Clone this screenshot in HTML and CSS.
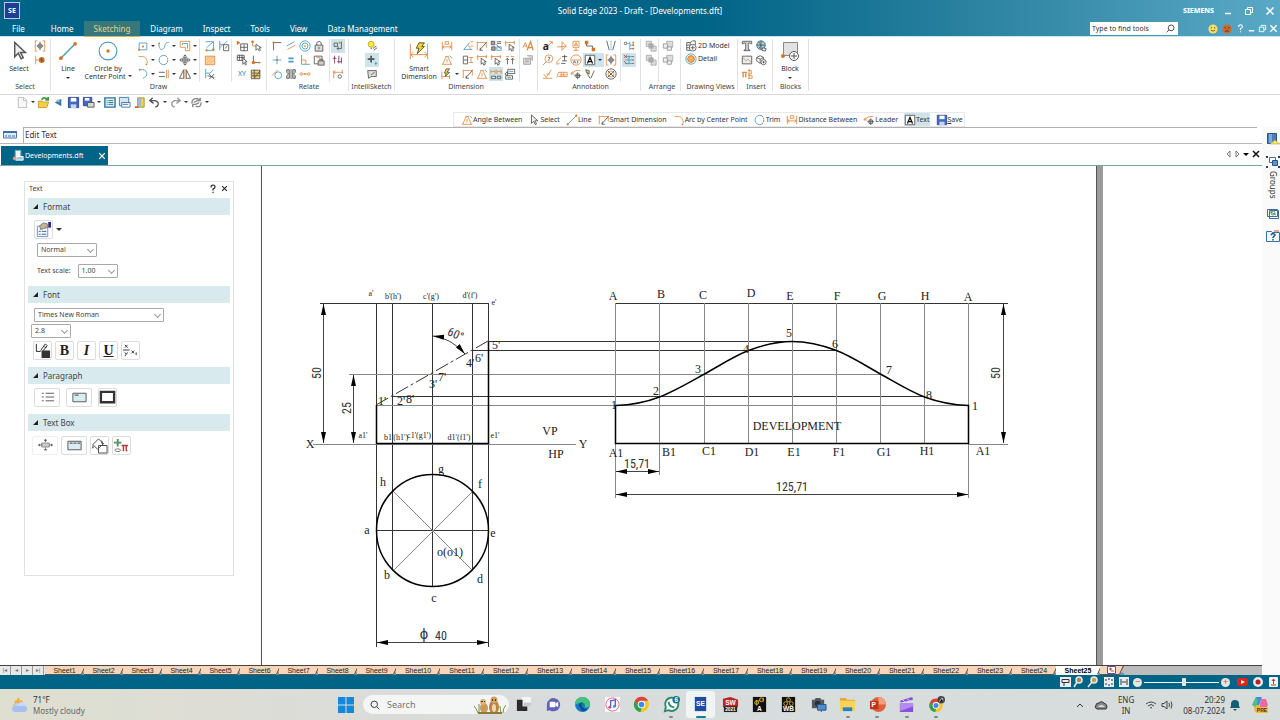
FILE: index.html
```html
<!DOCTYPE html>
<html lang="en">
<head>
    <meta charset="UTF-8">
    <meta name="viewport" content="width=device-width, initial-scale=1.0">
    <title>Solid Edge 2023 - Draft - [Developments.dft]</title>
    <link rel="stylesheet" href="styles.css">
</head>
<body>
    <!-- icons -->
    <svg class="sprite">
        <symbol id="pointer" viewBox="0 0 14 14"><path class="k" fill="#eee" d="M4 1v10l2.500-2.500 2 4 1.500-.8-2-3.700h3.500z"/></symbol>
        <symbol id="frame" viewBox="0 0 14 14"><path class="o" d="M4 1H1.500v12H4M10 1h2.500v12H10"/><circle class="k" cx="7" cy="7" r="2.500"/><path class="k" d="M7 2v10M3 7h8"/></symbol>
        <symbol id="snap" viewBox="0 0 14 14"><path class="o" d="M2 2v10M2 7h4"/><circle class="fo" cx="9" cy="7" r="3.500"/><path class="k" d="M7 6l4 2M9 4v6"/></symbol>
        <symbol id="line" viewBox="0 0 14 14"><path class="b" d="M2 12L12 2"/><circle class="fo" cx="2" cy="12" r="1.300"/><circle class="fo" cx="12" cy="2" r="1.300"/></symbol>
        <symbol id="circle" viewBox="0 0 18 18"><circle class="b" cx="9" cy="9" r="8"/><circle class="fo" cx="9" cy="9" r="1.500"/></symbol>
        <symbol id="rect" viewBox="0 0 14 14"><path class="b" d="M2.500 3.500h9v8h-9z"/><circle class="fo" cx="7" cy="7.500" r="1.200"/><circle class="fo" cx="2.500" cy="11.500" r="1.200"/></symbol>
        <symbol id="curve" viewBox="0 0 14 14"><path class="b" d="M1 4c0 10 6 8 7 3s3-4 5-4"/><circle class="fo" cx="1.500" cy="4" r="1"/></symbol>
        <symbol id="offset" viewBox="0 0 14 14"><path class="o" d="M1.500 1.500h11v11h-5v-4h-6z"/><path class="b" d="M4 6V4h6v6"/></symbol>
        <symbol id="arc" viewBox="0 0 14 14"><path class="o" d="M2 3h4c4 0 6 3 6 8"/><circle class="fo" cx="11" cy="12" r="1"/></symbol>
        <symbol id="trim" viewBox="0 0 14 14"><path class="b" d="M9 2a5.500 5.500 0 1 0 0 10"/><path class="k dash" d="M9 2q5 5 0 10"/></symbol>
        <symbol id="move" viewBox="0 0 14 14"><path class="k" d="M7 1v12M1 7h12M5 3l2-2 2 2M5 11l2 2 2-2M3 5L1 7l2 2M11 5l2 2-2 2M4.500 4.500h5v5h-5z"/></symbol>
        <symbol id="fillet" viewBox="0 0 14 14"><path class="b" d="M3 2h4c6 1 6 8 0 10"/><circle class="fo" cx="3" cy="2" r="1"/></symbol>
        <symbol id="extend" viewBox="0 0 14 14"><path class="k" d="M1 5h7M1 10h7"/><path class="o" d="M10 2v10M12 2v10"/></symbol>
        <symbol id="mirror" viewBox="0 0 14 14"><path class="k" d="M5.500 2v10h-5zM8.500 2v10h5z"/><path class="o" d="M7 1v12"/></symbol>
        <symbol id="goal" viewBox="0 0 14 14"><path class="b" d="M2 2h9M3 9l8-7v10M2 12h10"/><circle class="fo" cx="3" cy="12" r="1.300"/><circle class="fo" cx="11" cy="11" r="1.300"/></symbol>
        <symbol id="copy" viewBox="0 0 14 14"><path class="b" d="M2 1v11M2 5h5l4-4M2 9l4-4"/><path class="k" fill="#fff" d="M6.500 5.500h6v7h-6z"/><path class="k" d="M8 10l3-3"/></symbol>
        <symbol id="hatch" viewBox="0 0 14 14"><path fill="#ffd09a" stroke="#d58a48" d="M1.500 2.500h11v10h-11z"/><path class="o thin-line" d="M3 7l4-4M3 11l8-8M7 11l4-4"/></symbol>
        <symbol id="clean" viewBox="0 0 14 14"><path class="b" d="M2 1v11M2 6h5l4-4"/><path class="k" d="M6 7l6 6M12 7l-6 6M4 9l8 2"/></symbol>
        <symbol id="table" viewBox="0 0 14 14"><path class="k" d="M5.500 4.500h8v8h-8zM9.500 5v8M5 8.500h8"/><path class="fo" d="M1 1l4 2-4 3z"/></symbol>
        <symbol id="node" viewBox="0 0 14 14"><path class="o" d="M3 2v5h6"/><circle class="fo" cx="3" cy="2" r="1.500"/><path class="k" fill="#fff" d="M7 5v7l2-2 2 3 1-1-1-3h2z"/></symbol>
        <symbol id="gridsel" viewBox="0 0 14 14"><path class="k" d="M1.500 1.500h8v6h-8zM4 1v7M7 1v7M1 4h9"/><path class="k" fill="#fff" d="M8 5v7l2-2 1 3 1-1-1-3h2z"/></symbol>
        <symbol id="origin" viewBox="0 0 14 14"><path class="k" d="M4 2v8h8"/><circle class="fo" cx="4" cy="10" r="2"/><circle class="fo" cx="11" cy="10" r="1"/></symbol>
        <symbol id="notes" viewBox="0 0 14 14"><path class="k" fill="#f0d26b" d="M1.500 2.500h10v10h-10z"/><path class="k" d="M2 6h10M2 9h10M5 12l7-9M5 2v10"/></symbol>
        <symbol id="corner" viewBox="0 0 14 14"><path class="k" d="M3 12V3h9"/><circle class="fo" cx="3" cy="3" r="1.300"/></symbol>
        <symbol id="parallel" viewBox="0 0 14 14"><path class="b" d="M2 7l9-5"/><path class="o" d="M3 11l9-5"/></symbol>
        <symbol id="target" viewBox="0 0 14 14"><circle class="b" cx="7" cy="7" r="6"/><circle class="b" cx="7" cy="7" r="3.500"/><circle class="fo" cx="7" cy="7" r="1"/></symbol>
        <symbol id="lock" viewBox="0 0 14 14"><path class="k" fill="#ddd" d="M2.500 6h9v7h-9z"/><path class="k" d="M4.500 6V3q2.500-3 5 0v3M7 8v3"/></symbol>
        <symbol id="plus" viewBox="0 0 14 14"><path class="b" d="M7 2v10M2 7h10"/><circle class="fo" cx="7" cy="7" r="1"/></symbol>
        <symbol id="equal" viewBox="0 0 14 14"><path class="b thick" d="M4 5h6M4 9h6"/></symbol>
        <symbol id="perp" viewBox="0 0 14 14"><path class="b" d="M3 1v11h10"/><path class="o" d="M3 7h5v5"/></symbol>
        <symbol id="rigid" viewBox="0 0 14 14"><path class="k" d="M1.500 2.500h9v9h-9z"/><path class="k" fill="#ccc" d="M6 8h7v5H6zM8 8V6h3v2"/><path class="o" d="M4 4h4v3"/></symbol>
        <symbol id="tangent" viewBox="0 0 14 14"><circle class="b" cx="8.500" cy="8.500" r="4"/><path class="o" d="M1 9l7-7"/></symbol>
        <symbol id="symm" viewBox="0 0 14 14"><path class="k" fill="#ccc" d="M2 2h3v10H2V9l2-2-2-2zM12 2H9v10h3V9l-2-2 2-2z"/><path class="k" d="M7 1v12"/></symbol>
        <symbol id="chain" viewBox="0 0 14 14"><circle class="o" cx="2.500" cy="7" r="1.500"/><path class="o" d="M4 7h6"/><circle class="fo" cx="7" cy="7" r="1"/><circle class="o" cx="11.500" cy="7" r="1.500"/></symbol>
        <symbol id="keep" viewBox="0 0 14 14"><path class="k" d="M2.500 3.500h4v4h-4zM11 2v8H6l2-2M6 10l2 2"/><path class="fo" d="M8 2h2v2H8z"/></symbol>
        <symbol id="purple" viewBox="0 0 14 14"><path stroke="#7a356f" fill="none" d="M3 2v9M8 2v9M1 5h4M6 9h5M11 4v7"/></symbol>
        <symbol id="dimset" viewBox="0 0 14 14"><path class="o" d="M2 3v9M12 2v5M2 5h10M4 3L2 5l2 2"/><circle class="k" cx="9" cy="10" r="2"/></symbol>
        <symbol id="bulb" viewBox="0 0 14 14"><circle fill="#f4ec3c" stroke="#b5aa2e" cx="6" cy="5" r="3.500"/><path class="k" d="M6 9v2M8 10l4-3M9 12l4-3"/></symbol>
        <symbol id="cross" viewBox="0 0 14 14"><path class="k thick" d="M6 2v8M2 6h8"/><path class="b" d="M10 11h3M11.500 9v4"/></symbol>
        <symbol id="note" viewBox="0 0 14 14"><path fill="#ddd" class="k" d="M2 3h10v7H6l-3 2z"/><path class="k" d="M6 8l4-3"/></symbol>
        <symbol id="smart" viewBox="0 0 22 20"><path class="o" d="M1.500 2v17M20.500 2v17M2 14h18M5 11l-3 3 3 3M17 11l3 3-3 3"/><path fill="#f8d23e" stroke="#58501f" d="M11 1h6l-3 4h3l-8 8 2-6H8z"/></symbol>
        <symbol id="dist" viewBox="0 0 14 14"><path class="o" d="M1.500 2v10M12.500 2v10M2 8h10M4 6L2 8l2 2M10 6l2 2-2 2M5 2h4v3H5z"/></symbol>
        <symbol id="angle" viewBox="0 0 14 14"><path class="o" d="M1 12h12M2 12L6 3M8 3l4 9M5 3h4M7 6v4"/><path class="b" d="M10 2l3 3"/></symbol>
        <symbol id="angle2" viewBox="0 0 14 14"><path class="b" d="M2 11l7-8M2 11h10"/><path class="o" d="M6 6q4 1 4 5M10 2h3M10 7h3"/></symbol>
        <symbol id="flashdim" viewBox="0 0 14 14"><path class="o" d="M1 13V4M1 10h9M10 8v5"/><path fill="#f8d23e" stroke="#555" d="M6 1h4L7 5h3l-5 5 1-4H4z"/></symbol>
        <symbol id="coord" viewBox="0 0 14 14"><path class="o" d="M1.500 2v10M12 2v7M1 3h11"/><path class="k" d="M4 12l8-9M5 9v3h3"/></symbol>
        <symbol id="dimcopy" viewBox="0 0 14 14"><path class="k" d="M1.500 2.500h5v9h-5zM2 7h4"/><path class="o" d="M8 4h5M8 10h5M10.500 4v6"/></symbol>
        <symbol id="bracketdim" viewBox="0 0 14 14"><path class="o" d="M1 3h12M2 1v6M12 1v4"/><path class="k" fill="#fff" d="M6 5v7l2-2 1 3 2-1-1-3h2z"/></symbol>
        <symbol id="feature" viewBox="0 0 14 14"><path class="k" fill="#aaa" d="M1.500 1.500h4v4h-4zM2 8h4v4H2z"/><path class="k" d="M8 2h5M8 4h5"/><path class="b" d="M8 8h5v4H8z"/><path class="k" d="M7 5l5 5"/></symbol>
        <symbol id="arrowsup" viewBox="0 0 14 14"><path class="k" d="M4 12V5M10 12V5M2 7l2-2 2 2M8 7l2-2 2 2"/><path class="o" d="M2 3h4M8 3h4"/></symbol>
        <symbol id="align" viewBox="0 0 14 14"><path class="o" d="M1 2v5M6 2v5M1 4h5M8 2v5M13 2v5M8 4h5"/><path class="k" d="M1.500 9.500h5v3h-5zM8.500 9.500h4v3h-4z"/></symbol>
        <symbol id="stack" viewBox="0 0 14 14"><path class="k" d="M4.500 1.500h8v5h-8zM2 9h8v4H2zM1 7l3-3v5z"/><path class="b" d="M6 4h5M4 11h4"/></symbol>
        <symbol id="aa" viewBox="0 0 14 14"><path class="o" d="M1 9l3-6 2 6M2 7h3"/><path class="o wide-line" d="M6 12l4-10 3 10M7 9h5"/></symbol>
        <symbol id="style" viewBox="0 0 14 14"><path fill="#ddd" stroke="#999" d="M2 5h8v7H2zM6 2h6v6"/><path stroke="#999" d="M4 7h4M4 9h4"/></symbol>
        <symbol id="callout" viewBox="0 0 14 14"><text class="ico" x="1" y="12">a</text><path class="o" d="M7 7l5-5M9 2h3v3"/></symbol>
        <symbol id="balloon" viewBox="0 0 14 14"><path class="o" d="M1 8h5l6-1-5-5v10l5-5"/></symbol>
        <symbol id="datum" viewBox="0 0 14 14"><path class="o" d="M3.500 1.500h7v7h-7zM7 9v3M4 12h6M5 7l2-4 2 4M6 6h2"/></symbol>
        <symbol id="connector" viewBox="0 0 14 14"><path class="k" d="M3 3v4h7v4"/><path class="fo" d="M1 1h4v4H1zM9 9h4v4H9z"/></symbol>
        <symbol id="vee" viewBox="0 0 14 14"><path class="k" d="M2 1l3 11M12 1L9 12"/><path class="b dash" d="M7 1v11"/></symbol>
        <symbol id="find" viewBox="0 0 14 14"><circle class="o" cx="8" cy="5.500" r="4.500"/><path class="o" d="M5 9l-4 4"/><path class="k" d="M7 4q3-1 2 1l-1 1v2"/></symbol>
        <symbol id="level" viewBox="0 0 14 14"><path class="o" d="M1 12V9l5-5M1 12l3-1"/><path class="k" d="M7 3h6M10 1v7M7 8h6M6 11h5"/></symbol>
        <symbol id="datumt" viewBox="0 0 14 14"><circle class="o" cx="7" cy="7" r="6"/><path class="o" d="M2 7h10"/><path class="k" d="M4 11l1-3 2 3M9 8v3"/></symbol>
        <symbol id="textbox" viewBox="0 0 14 14"><path class="k" fill="#fff" d="M1.500 1.500h11v11h-11z"/><path stroke="#111" stroke-width="1.500" fill="none" d="M4 11l3-7 3 7M5 9h4"/></symbol>
        <symbol id="surface" viewBox="0 0 14 14"><path class="o" d="M2 7l3 4 6-9M1 12h11M5 7h4"/></symbol>
        <symbol id="fcf" viewBox="0 0 14 14"><path class="o" d="M1 11l2-6h10v5H3M6 5v5M9 5v5M5 8h7"/></symbol>
        <symbol id="leader" viewBox="0 0 14 14"><path class="o" d="M1 7l6-4h5M1 7l2-3M1 7h4"/><path class="k" fill="#fff" d="M7 7h4v4H7z"/><path class="k" d="M9 5v8M5 9h8"/></symbol>
        <symbol id="weld" viewBox="0 0 14 14"><path fill="#e5dc4c" class="k" d="M2 2l4 1v4L3 5z"/><path class="k" d="M3 5l4 7M8 12l4-9"/></symbol>
        <symbol id="bolt" viewBox="0 0 14 14"><circle class="k" cx="7" cy="7" r="6"/><circle class="o" cx="7" cy="7" r="3.500"/><path class="k" d="M3 3l8 8M11 3l-8 8"/></symbol>
        <symbol id="listset" viewBox="0 0 14 14"><circle class="k" cx="3" cy="4" r="1.500"/><path class="b" d="M5 4h3M8 2v10M8 6h4M8 10h4"/><path class="fo" d="M11 2h2v2h-2zM11 5h2v2h-2zM11 9h2v2h-2z"/></symbol>
        <symbol id="listoff" viewBox="0 0 14 14"><path class="b" d="M7 2v10M2 3h10M2 7h10M2 11h10"/><path stroke="#c54e3a" d="M1 1l4 4M5 1L1 5M1 8l4 4M11 3h2M11 7h2M11 11h2"/></symbol>
        <symbol id="front" viewBox="0 0 14 14"><path fill="#ddd" stroke="#aaa" d="M1.500 1.500h6v6h-6zM7 7h6v6H7z"/><path fill="#aaa" d="M4 4h6v6H4z"/></symbol>
        <symbol id="group" viewBox="0 0 14 14"><path fill="#ddd" stroke="#aaa" d="M5.500 1.500h7v7h-7z"/><path fill="#eee" stroke="#999" d="M1.500 4.500h5v5h-5zM6 8h5v4H6z"/></symbol>
        <symbol id="model" viewBox="0 0 14 14"><path class="k" d="M2 12V3h4v9zM6 3l3-2h3v5M2 6h4M2 9h4"/><circle class="k" fill="#fff" cx="9" cy="9" r="4"/><path class="k" d="M9 6.500v5M6.500 9h5"/></symbol>
        <symbol id="detail" viewBox="0 0 14 14"><circle cx="7" cy="7" r="6" fill="#fff" stroke="#4a9cba"/><circle cx="7" cy="7" r="4" fill="#f1ab62" stroke="#d77d2d"/></symbol>
        <symbol id="bigt" viewBox="0 0 14 14"><path class="k" fill="#ddd" d="M1.500 1.500h11v3h-1l-1-1H8.500v8h2v1h-7v-1h2v-8H3.500l-1 1h-1z"/></symbol>
        <symbol id="globe" viewBox="0 0 14 14"><circle cx="7" cy="6" r="5" fill="#a9cddb" stroke="#28708a"/><path class="k" d="M7 1v10M2 6h10M4 2q5 5 0 8"/><path fill="#eee" class="k" d="M9 9l4 1-1 3-4-1z"/></symbol>
        <symbol id="image" viewBox="0 0 14 14"><path class="k" fill="#e6eef0" d="M1.500 2.500h11v9h-11z"/><path class="o" d="M2 4l4 4 2-2 4 4"/></symbol>
        <symbol id="blockadd" viewBox="0 0 14 14"><path class="k" d="M2 4l4-2 4 2v4l-4 3-4-3zM2 4l4 2 4-2M6 6v4"/><circle class="k" fill="#fff" cx="10" cy="9.500" r="3"/><path class="k" d="M10 8v3M8.500 9.500h3"/></symbol>
        <symbol id="pi" viewBox="0 0 14 14"><path class="o wide-line" d="M1 5h6M2.500 5v6M5.500 5v6"/><path class="o" d="M9.500 1v12M8 3h4v4H8M8 9h5v3H8"/></symbol>
        <symbol id="block" viewBox="0 0 20 20"><path fill="#e2e2e2" stroke="#888" d="M3.500 1.500h14v13h-14z"/><circle class="k" fill="#fff" cx="14" cy="15" r="4.500"/><path class="k" d="M14 12v6M11 15h6"/><circle class="fo" cx="3" cy="15" r="2"/></symbol>
        <symbol id="new" viewBox="0 0 14 14"><path fill="#f7f7f7" stroke="#bbb" d="M2.500 1.500h6l3 3v8h-9zM8 2v3h3"/></symbol>
        <symbol id="open" viewBox="0 0 14 14"><path fill="#f7cf44" stroke="#c89a2a" d="M1.500 5.500h4l1 1h6l-2 6h-9z"/><path stroke="#3a9c44" fill="none" stroke-width="2" d="M5 4q3-4 6 0M9 4h3V1"/></symbol>
        <symbol id="share" viewBox="0 0 14 14"><path fill="#3c78a8" d="M3 7l7-4v8z"/><path fill="#9bc6df" d="M4 5l4-2v4z"/></symbol>
        <symbol id="save" viewBox="0 0 14 14"><path fill="#4468c4" stroke="#2a4590" d="M1.500 1.500h11v11h-11z"/><path fill="#fff" d="M4 2h6v4H4z"/><path fill="#c9d4ee" d="M4 9h6v4H4z"/></symbol>
        <symbol id="saveas" viewBox="0 0 14 14"><path fill="#4468c4" stroke="#2a4590" d="M1.500 1.500h9v9h-9z"/><path fill="#fff" d="M3 2h5v3H3z"/><path fill="#cfe0cf" class="k" d="M6 7h7v5H6z"/></symbol>
        <symbol id="props" viewBox="0 0 14 14"><path fill="#e3f0f5" stroke="#2f7691" stroke-width="1.500" d="M2 2h11v10H2z"/><path stroke="#2f7691" d="M4 5h1M6 5h5M4 7h1M6 7h5M4 9h1M6 9h5"/></symbol>
        <symbol id="print" viewBox="0 0 14 14"><path fill="#d4e8f2" stroke="#3c78a8" d="M1.500 1.500h10v9h-10z"/><path fill="#fff" stroke="#3c78a8" d="M4 7h9v5H4z"/><path stroke="#3c78a8" d="M5 9h6"/></symbol>
        <symbol id="color" viewBox="0 0 14 14"><path fill="#f7d449" stroke="#a98c2a" d="M5 2h7v10H5z"/><path fill="#9dbbd4" d="M5 3l4-1v9l-4 2z"/><path fill="#d36c30" d="M2 11h4v2H2z"/></symbol>
        <symbol id="undo" viewBox="0 0 14 14"><path class="k wide-line" d="M5 2L2 5l4 3M2 5h6q5 2 2 6l-2 1"/></symbol>
        <symbol id="redo" viewBox="0 0 14 14"><path stroke="#999" stroke-width="1.500" fill="none" d="M9 2l3 3-4 3M12 5H6q-5 2-2 6l2 1"/></symbol>
        <symbol id="repeat" viewBox="0 0 14 14"><path stroke="#888" stroke-width="1.500" fill="none" d="M2 8q0-6 6-5l3 2M11 2v3H8M12 7q0 6-6 4M3 12V9h3M4 7l4-2M6 9l4-2"/></symbol>
        <symbol id="prompt" viewBox="0 0 14 8"><path fill="#dcebf7" stroke="#4b7cb0" d="M.5 1h13v6H.5z"/><path fill="#3d6fa8" d="M0 0h14v2H0z"/><path fill="#8fb2d4" d="M2 4h2v2H2zM5 4h3v2H5zM9 4h3v2H9z"/></symbol>
        <symbol id="doc" viewBox="0 0 14 14"><path fill="#e9f2f7" stroke="#78a6be" d="M3.500 1.500h6v9h-6z"/><path fill="#a4c5d8" stroke="#fff" d="M6 8h6v4H4z"/><circle fill="#d9a08a" cx="3" cy="10" r="2"/></symbol>
        <symbol id="help" viewBox="0 0 10 12"><path fill="none" stroke="currentColor" stroke-width="1.500" d="M2.500 4q0-3 2.500-3t2.500 2.500Q7.500 5 5 6v2M5 9.500V11"/></symbol>
        <symbol id="close" viewBox="0 0 10 10"><path fill="none" stroke="currentColor" stroke-width="1.500" d="M1.500 1.500l7 7M8.500 1.500l-7 7"/></symbol>
        <symbol id="min" viewBox="0 0 10 10"><path stroke="currentColor" stroke-width="1.500" d="M2 7.500h6"/></symbol>
        <symbol id="restore" viewBox="0 0 10 10"><path fill="none" stroke="currentColor" d="M3.500 3V1.500h5v5H7M1.500 3.500h5v5h-5z"/></symbol>
        <symbol id="search" viewBox="0 0 14 14"><circle cx="6" cy="6" r="4.500" fill="none" stroke="currentColor" stroke-width="1.300"/><path stroke="currentColor" stroke-width="1.300" d="M9.500 9.500L13 13"/></symbol>
        <symbol id="search-left" viewBox="0 0 14 14"><circle cx="8" cy="6" r="4.500" fill="none" stroke="currentColor" stroke-width="1.300"/><path stroke="currentColor" stroke-width="1.300" d="M4.500 9.500L1 13"/></symbol>
        <symbol id="smile" viewBox="0 0 12 12"><circle cx="6" cy="6" r="5.500" fill="#f4df6a"/><path fill="none" stroke="#6b5a18" d="M4 3.500v2M8 3.500v2M3.500 7.500q2.500 2 5 0"/></symbol>
        <symbol id="frown" viewBox="0 0 12 12"><circle cx="6" cy="6" r="5.500" fill="#cf6a2f"/><path fill="none" stroke="#55240c" d="M3 4l2 1M9 4L7 5M3.500 9q2.500-2 5 0"/></symbol>
        <symbol id="chrome" viewBox="0 0 18 18"><circle cx="9" cy="9" r="8" fill="#f6c42d"/><path fill="#dd4438" d="M2 5a8 8 0 0 1 14 0H9L6 11z"/><path fill="#2ba24c" d="M2 5l4 6 3 2-1 4A8 8 0 0 1 2 5z"/><circle cx="9" cy="9" r="4" fill="#fff"/><circle cx="9" cy="9" r="3" fill="#4285f4"/></symbol>
    </svg>

    <header class="titlebar">
        <div class="title-row">
            <div class="logo">SE</div>
            <h1>Solid Edge 2023 - Draft - [Developments.dft]</h1>
            <div class="window-controls">
                <b>SIEMENS</b>
                <button aria-label="Minimize"><svg><use href="#min"/></svg></button>
                <button aria-label="Restore"><svg><use href="#restore"/></svg></button>
                <button aria-label="Close"><svg><use href="#close"/></svg></button>
            </div>
        </div>
        <div class="menu-row">
            <nav class="menu">
                <a class="file" href="#">File</a>
                <a href="#">Home</a>
                <a class="active" href="#">Sketching</a>
                <a href="#">Diagram</a>
                <a href="#">Inspect</a>
                <a href="#">Tools</a>
                <a href="#">View</a>
                <a href="#">Data Management</a>
            </nav>
            <div class="find">
                <input type="text" aria-label="Find tools" placeholder="Type to find tools">
                <svg><use href="#search-left"/></svg>
            </div>
            <div class="doc-controls">
                <button class="face" aria-label="Like"><svg><use href="#smile"/></svg></button>
                <button class="face" aria-label="Dislike"><svg><use href="#frown"/></svg></button>
                <button aria-label="Help"><svg><use href="#help"/></svg></button>
                <button aria-label="Minimize document"><svg><use href="#min"/></svg></button>
                <button aria-label="Restore document"><svg><use href="#restore"/></svg></button>
                <button aria-label="Close document"><svg><use href="#close"/></svg></button>
            </div>
        </div>
    </header>

    <section class="ribbon">
        <div class="group g-select">
            <div class="tools">
                <button class="big"><svg class="big-icon"><use href="#pointer"/></svg>Select</button>
                <div class="col">
                    <button class="tool"><svg><use href="#frame"/></svg></button>
                    <button class="tool"><svg><use href="#snap"/></svg></button>
                </div>
            </div>
            <div class="group-name">Select</div>
        </div>
        <div class="group g-draw">
            <div class="tools">
                <button class="big narrow drop"><svg class="big-icon"><use href="#line"/></svg>Line</button>
                <button class="big wide"><svg class="big-icon"><use href="#circle"/></svg><span>Circle by</span><span class="inline-drop">Center Point</span></button>
                <div class="col">
                    <button class="tool more"><svg><use href="#rect"/></svg></button>
                    <button class="tool more"><svg><use href="#arc"/></svg></button>
                    <button class="tool more"><svg><use href="#fillet"/></svg></button>
                </div>
                <div class="col">
                    <button class="tool more"><svg><use href="#curve"/></svg></button>
                    <button class="tool more"><svg><use href="#trim"/></svg></button>
                    <button class="tool more"><svg><use href="#extend"/></svg></button>
                </div>
                <div class="col">
                    <button class="tool more"><svg><use href="#offset"/></svg></button>
                    <button class="tool more"><svg><use href="#move"/></svg></button>
                    <button class="tool more"><svg><use href="#mirror"/></svg></button>
                </div>
                <div class="col split">
                    <button class="tool"><svg><use href="#goal"/></svg></button>
                    <button class="tool"><svg><use href="#hatch"/></svg></button>
                    <button class="tool"><svg><use href="#clean"/></svg></button>
                </div>
                <div class="col">
                    <button class="tool"><svg><use href="#copy"/></svg></button>
                </div>
                <div class="col split">
                    <button class="tool"><svg><use href="#table"/></svg></button>
                    <button class="tool"><svg><use href="#gridsel"/></svg></button>
                    <button class="tool xy">XY</button>
                </div>
                <div class="col">
                    <button class="tool"><svg><use href="#node"/></svg></button>
                    <button class="tool"><svg><use href="#origin"/></svg></button>
                    <button class="tool"><svg><use href="#notes"/></svg></button>
                </div>
            </div>
            <div class="group-name">Draw</div>
        </div>
        <div class="group g-relate">
            <div class="tools">
                <div class="col">
                    <button class="tool"><svg><use href="#corner"/></svg></button>
                    <button class="tool"><svg><use href="#plus"/></svg></button>
                    <button class="tool"><svg><use href="#tangent"/></svg></button>
                </div>
                <div class="col">
                    <button class="tool"><svg><use href="#parallel"/></svg></button>
                    <button class="tool"><svg><use href="#equal"/></svg></button>
                    <button class="tool"><svg><use href="#symm"/></svg></button>
                </div>
                <div class="col">
                    <button class="tool"><svg><use href="#target"/></svg></button>
                    <button class="tool"><svg><use href="#perp"/></svg></button>
                    <button class="tool"><svg><use href="#chain"/></svg></button>
                </div>
                <div class="col">
                    <button class="tool"><svg><use href="#lock"/></svg></button>
                    <button class="tool"><svg><use href="#rigid"/></svg></button>
                </div>
                <div class="col split">
                    <button class="tool on"><svg><use href="#keep"/></svg></button>
                    <button class="tool"><svg><use href="#purple"/></svg></button>
                    <button class="tool"><svg><use href="#dimset"/></svg></button>
                </div>
            </div>
            <div class="group-name">Relate</div>
        </div>
        <div class="group g-intelli">
            <div class="tools">
                <div class="col">
                    <button class="tool"><svg><use href="#bulb"/></svg></button>
                    <button class="tool on"><svg><use href="#cross"/></svg></button>
                    <button class="tool"><svg><use href="#note"/></svg></button>
                </div>
            </div>
            <div class="group-name">IntelliSketch</div>
        </div>
        <div class="group g-dimension">
            <div class="tools">
                <button class="big wide"><svg class="big-icon"><use href="#smart"/></svg><span>Smart</span><span>Dimension</span></button>
                <div class="col">
                    <button class="tool"><svg><use href="#dist"/></svg></button>
                    <button class="tool"><svg><use href="#angle"/></svg></button>
                    <button class="tool more"><svg><use href="#flashdim"/></svg></button>
                </div>
                <div class="col">
                    <button class="tool"><svg><use href="#angle2"/></svg></button>
                    <button class="tool"><svg><use href="#dimcopy"/></svg></button>
                    <button class="tool"><svg><use href="#coord"/></svg></button>
                </div>
                <div class="col">
                    <button class="tool"><svg><use href="#coord"/></svg></button>
                    <button class="tool"><svg><use href="#bracketdim"/></svg></button>
                    <button class="tool"><svg><use href="#angle"/></svg></button>
                </div>
                <div class="col">
                    <button class="tool"><svg><use href="#feature"/></svg></button>
                    <button class="tool"><svg><use href="#bracketdim"/></svg></button>
                    <button class="tool on"><svg><use href="#align"/></svg></button>
                </div>
                <div class="col">
                    <button class="tool"><svg><use href="#bracketdim"/></svg></button>
                    <button class="tool"><svg><use href="#arrowsup"/></svg></button>
                    <button class="tool"><svg><use href="#stack"/></svg></button>
                </div>
                <div class="col split">
                    <button class="tool"><svg><use href="#aa"/></svg></button>
                    <button class="tool"><svg><use href="#style"/></svg></button>
                </div>
            </div>
            <div class="group-name">Dimension</div>
        </div>
        <div class="group g-annotation">
            <div class="tools">
                <div class="col">
                    <button class="tool"><svg><use href="#callout"/></svg></button>
                    <button class="tool"><svg><use href="#find"/></svg></button>
                    <button class="tool"><svg><use href="#surface"/></svg></button>
                </div>
                <div class="col">
                    <button class="tool"><svg><use href="#balloon"/></svg></button>
                    <button class="tool"><svg><use href="#level"/></svg></button>
                    <button class="tool"><svg><use href="#fcf"/></svg></button>
                </div>
                <div class="col">
                    <button class="tool"><svg><use href="#datum"/></svg></button>
                    <button class="tool"><svg><use href="#datumt"/></svg></button>
                    <button class="tool"><svg><use href="#leader"/></svg></button>
                </div>
                <div class="col">
                    <button class="tool"><svg><use href="#connector"/></svg></button>
                    <button class="tool more on"><svg><use href="#textbox"/></svg></button>
                    <button class="tool"><svg><use href="#weld"/></svg></button>
                </div>
                <div class="col">
                    <button class="tool"><svg><use href="#vee"/></svg></button>
                    <button class="tool"><svg><use href="#frame"/></svg></button>
                    <button class="tool"><svg><use href="#bolt"/></svg></button>
                </div>
                <div class="col split">
                    <button class="tool"><svg><use href="#listset"/></svg></button>
                    <button class="tool on"><svg><use href="#listoff"/></svg></button>
                </div>
            </div>
            <div class="group-name">Annotation</div>
        </div>
        <div class="group g-arrange">
            <div class="tools">
                <div class="col">
                    <button class="tool"><svg><use href="#front"/></svg></button>
                    <button class="tool"><svg><use href="#front"/></svg></button>
                </div>
                <div class="col split">
                    <button class="tool"><svg><use href="#group"/></svg></button>
                    <button class="tool"><svg><use href="#group"/></svg></button>
                </div>
            </div>
            <div class="group-name">Arrange</div>
        </div>
        <div class="group g-views">
            <div class="tools">
                <div class="col">
                    <button class="tool labelled"><svg><use href="#model"/></svg>2D Model</button>
                    <button class="tool labelled"><svg><use href="#detail"/></svg>Detail</button>
                </div>
            </div>
            <div class="group-name">Drawing Views</div>
        </div>
        <div class="group g-insert">
            <div class="tools">
                <div class="col">
                    <button class="tool"><svg><use href="#bigt"/></svg></button>
                    <button class="tool"><svg><use href="#image"/></svg></button>
                    <button class="tool"><svg><use href="#pi"/></svg></button>
                </div>
                <div class="col">
                    <button class="tool"><svg><use href="#globe"/></svg></button>
                    <button class="tool"><svg><use href="#blockadd"/></svg></button>
                </div>
            </div>
            <div class="group-name">Insert</div>
        </div>
        <div class="group g-blocks">
            <div class="tools">
                <button class="big narrow drop"><svg class="big-icon"><use href="#block"/></svg>Block</button>
            </div>
            <div class="group-name">Blocks</div>
        </div>
    </section>

    <div class="quick">
        <button class="tool more"><svg><use href="#new"/></svg></button>
        <button class="tool"><svg><use href="#open"/></svg></button>
        <button class="tool"><svg><use href="#share"/></svg></button>
        <button class="tool"><svg><use href="#save"/></svg></button>
        <button class="tool more"><svg><use href="#saveas"/></svg></button>
        <button class="tool"><svg><use href="#props"/></svg></button>
        <button class="tool"><svg><use href="#print"/></svg></button>
        <button class="tool"><svg><use href="#color"/></svg></button>
        <button class="tool more"><svg><use href="#undo"/></svg></button>
        <button class="tool more"><svg><use href="#redo"/></svg></button>
        <button class="tool more"><svg><use href="#repeat"/></svg></button>
    </div>

    <div class="shortcuts">
        <div class="shortcut-bar">
            <button><svg><use href="#angle"/></svg>Angle Between</button>
            <button><svg><use href="#pointer"/></svg>Select</button>
            <button><svg><use href="#line"/></svg>Line</button>
            <button><svg><use href="#coord"/></svg>Smart Dimension</button>
            <button><svg><use href="#arc"/></svg>Arc by Center Point</button>
            <button><svg><use href="#trim"/></svg>Trim</button>
            <button><svg><use href="#dist"/></svg>Distance Between</button>
            <button><svg><use href="#leader"/></svg>Leader</button>
            <button class="on"><svg><use href="#textbox"/></svg>Text</button>
            <button><svg><use href="#save"/></svg><span><u>S</u>ave</span></button>
        </div>
    </div>

    <main class="main">
        <div class="document">
            <div class="prompt-bar">
                <svg><use href="#prompt"/></svg>
                <p>Edit Text</p>
            </div>
            <div class="doc-tabs">
                <button class="doc-tab"><svg class="doc-icon"><use href="#doc"/></svg>Developments.dft<svg class="x"><use href="#close"/></svg></button>
                <div class="doc-nav">
                    <svg viewBox="0 0 40 10"><path fill="none" stroke="#777" d="M8 2L5 5l3 3zM14 2l3 3-3 3z"/><path d="M21 4h6l-3 3z"/><path stroke="#111" stroke-width="1.500" d="M31 2l6 6M37 2l-6 6"/></svg>
                </div>
            </div>
            <div class="workspace">
                <svg class="sheet" viewBox="0 166 1262 499" preserveAspectRatio="xMinYMin meet">
                    <defs>
                        <marker id="arrow" viewBox="0 0 11 6" refX="11" refY="3" markerWidth="11" markerHeight="6" markerUnits="userSpaceOnUse" orient="auto-start-reverse"><path d="M0 .5L11 3 0 5.500z"/></marker>
                    </defs>
                    <!-- sheet edges -->
                    <path class="edge" d="M261.500 166v499"/>
                    <path fill="#9b9b9b" d="M1096 166h7v499h-7z"/>
                    <path class="edge" d="M1096.500 166v499"/>

                    <!-- front and top view -->
                    <g class="thin">
                        <path d="M320 303.500h169M376.500 303v344M392.500 303v267M432.500 303v284M472.500 303v267M488.500 303v344"/>
                        <path d="M488 341.500h304M472 350.500h364M392 396.500h532M376 530.500h112"/>
                        <path class="grey" d="M349 374.500h532M376 405.500h592M313 444.500h263M393 491l80 80M393 571l80-80"/>
                    </g>
                    <path class="slope" d="M376 405l112-64"/>
                    <path class="bold" d="M376.500 405v38.500h112V342"/>
                    <circle class="bold" cx="432.500" cy="530.500" r="56"/>
                    <g class="dim">
                        <path d="M323.500 304v139"/>
                        <path d="M353.500 375v68"/>
                        <path d="M377 642.500h111"/>
                        <path d="M433 336q18 2 32 18"/>
                    </g>

                    <!-- development -->
                    <g class="thin">
                        <path d="M615 303.500h393"/>
                        <path class="grey" d="M615.500 303v195M659.500 303v172M704.500 303v140M748.500 303v140M792.500 303v140M836.500 303v140M880.500 303v140M924.500 303v140M968.500 303v195M968 444.500h40"/>
                    </g>
                    <path class="bold" d="M615.500 405.500V443.500h353V405.500C953 405 938 402 924.500 397 909 391 895 382 880.500 374S851 356 836.500 350.500 807 341.500 792 341.500 763 345 748.500 350.500 719 366 704.500 374 675 391 659.500 397 631 405 615.500 405.500"/>
                    <g class="dim">
                        <path d="M1003.500 304v139"/>
                        <path d="M616 471.500h43"/>
                        <path d="M616 494.500h352"/>
                    </g>

                    <g class="dim-text">
                        <text transform="translate(321 373) rotate(-90)">50</text>
                        <text transform="translate(351 408) rotate(-90)">25</text>
                        <text transform="translate(1000 373) rotate(-90)">50</text>
                        <text transform="translate(454 338) rotate(25)">60°</text>
                        <text class="phi" x="424" y="639">ϕ</text>
                        <text x="441" y="640">40</text>
                        <text x="637" y="468">15,71</text>
                        <text x="792" y="491">125,71</text>
                    </g>
                    <g class="small-text">
                        <text x="371" y="296">a'</text><text x="393" y="299">b'(h')</text><text x="431" y="299">c'(g')</text><text x="470" y="298">d'(f')</text><text x="494" y="305">e'</text>
                        <text x="363" y="438">a1'</text><text x="396" y="440">b1'(h1')</text><text x="419" y="438">c1'(g1')</text><text x="459" y="440">d1'(f1')</text><text x="495" y="438">e1'</text>
                    </g>
                    <g class="label-text">
                        <text x="382" y="405">1'</text><text x="401" y="405">2'</text><text x="410" y="403">8'</text><text x="433" y="388">3'</text><text x="442" y="381">7'</text><text x="470" y="367">4'</text><text x="479" y="362">6'</text><text x="496" y="349">5'</text>
                        <text x="310" y="448">X</text><text x="583" y="448">Y</text><text x="550" y="435">VP</text><text x="556" y="458">HP</text>
                        <text x="441" y="473">g</text><text x="383" y="486">h</text><text x="480" y="488">f</text><text x="367" y="534">a</text><text x="493" y="537">e</text><text x="387" y="579">b</text><text x="480" y="583">d</text><text x="434" y="602">c</text><text x="450" y="556">o(o1)</text>
                        <text x="613" y="300">A</text><text x="661" y="298">B</text><text x="703" y="299">C</text><text x="751" y="297">D</text><text x="790" y="300">E</text><text x="837" y="300">F</text><text x="882" y="300">G</text><text x="925" y="300">H</text><text x="968" y="301">A</text>
                        <text x="616" y="457">A1</text><text x="669" y="456">B1</text><text x="709" y="455">C1</text><text x="752" y="456">D1</text><text x="794" y="456">E1</text><text x="839" y="456">F1</text><text x="884" y="456">G1</text><text x="927" y="455">H1</text><text x="983" y="455">A1</text>
                        <text x="614" y="409">1</text><text x="656" y="395">2</text><text x="698" y="373">3</text><text x="746" y="353">4</text><text x="789" y="337">5</text><text x="835" y="348">6</text><text x="889" y="374">7</text><text x="929" y="399">8</text><text x="975" y="410">1</text>
                        <text x="797" y="430">DEVELOPMENT</text>
                    </g>
                </svg>

                <aside class="panel">
                    <div class="panel-title">Text <span><svg class="q"><use href="#help"/></svg><svg><use href="#close"/></svg></span></div>
                    <h2>Format</h2>
                    <div class="panel-body format">
                        <button class="format-button" aria-label="Properties"><svg viewBox="0 0 18 18"><path fill="#f5f9ff" stroke="#6d8fc0" d="M2.500 5.500h11v11h-11z"/><path stroke="#35619e" d="M4 11h2M7 11h5M4 14h2M7 14h5"/><path fill="#cbb193" stroke="#777" d="M5 5l4-3 4 1v4l-4 1-3 1z"/><path fill="#2a2a80" d="M14 1h3v6h-3z"/></svg></button><span class="caret"></span>
                        <div class="row indent"><span class="select w60"><select aria-label="Style"><option>Normal</option></select></span></div>
                        <div class="row indent"><label for="scale">Text scale:</label><span class="select w40"><select id="scale"><option>1.00</option></select></span></div>
                    </div>
                    <h2>Font</h2>
                    <div class="panel-body font">
                        <div class="row"><span class="select w130"><select aria-label="Font"><option>Times New Roman</option></select></span></div>
                        <div class="row size"><span class="select w40"><select aria-label="Font size"><option>2.8</option></select></span></div>
                        <div class="row letters">
                            <button aria-label="Colour"><svg viewBox="0 0 18 18"><path fill="none" stroke="#222" d="M2.500 2v8H7M7 9l5-7 2 2-5 6M11 5l2 1"/><path fill="#333" d="M8 9h9v8H8z"/></svg></button>
                            <button><b>B</b></button>
                            <button><b><i>I</i></b></button>
                            <button><b><u>U</u></b></button>
                            <button aria-label="Fraction"><svg viewBox="0 0 18 18"><path stroke="#333" d="M1 8.500h7"/><path fill="none" stroke="#333" d="M3 3l3 3M6 3L3 6M3 11l1.500 2L6 11M4.500 13L3 15M10 9l3 3M13 9l-3 3M15 11v3"/></svg></button>
                        </div>
                    </div>
                    <h2>Paragraph</h2>
                    <div class="panel-body paragraph">
                        <button class="wide" aria-label="Bullets"><svg viewBox="0 0 18 18"><path stroke="#555" d="M3 4.500h2M7 4.500h9M3 8.500h2M7 8.500h9M3 12.500h2M7 12.500h9"/></svg></button>
                        <button class="wide" aria-label="Justify"><svg viewBox="0 0 18 18"><path fill="#d9ecf3" stroke="#555" d="M2 4.500h14v9H2z"/><path stroke="#333" d="M4 6.500h4"/></svg></button>
                        <button aria-label="Border"><svg viewBox="0 0 18 18"><path fill="#fff" stroke="#333" stroke-width="2.500" d="M2 3h14v11H2z"/></svg></button>
                    </div>
                    <h2>Text Box</h2>
                    <div class="panel-body textbox">
                        <button class="wide flat" aria-label="Fit"><svg viewBox="0 0 18 18"><path fill="#eee" stroke="#777" d="M5 6.500h8v4H5z"/><path fill="none" stroke="#666" stroke-dasharray="1 1" d="M5 8.500h8M1 8.500h3M14 8.500h3M9 2v4M9 11v4"/><path fill="#555" d="M2 7l2 1.500L2 10zM16 7l-2 1.500 2 1.500zM7 3h4L9 5zM7 14h4l-2-2z"/></svg></button>
                        <button class="wide" aria-label="Text box"><svg viewBox="0 0 18 18"><path fill="#d9ecf3" stroke="#555" d="M2 4.500h14v9H2z"/><path stroke="#333" stroke-dasharray="3 1" d="M4 6.500h11"/></svg></button>
                        <button aria-label="Fill"><svg viewBox="0 0 18 18"><path fill="#fff" stroke="#444" d="M2 8l6-6 5 5-6 6zM8 9h9v8H8z"/><path fill="#555" d="M2 8l-1 4h2zM11 3l3 5-3-1z"/></svg></button>
                        <button aria-label="Symbols"><svg viewBox="0 0 18 18"><path stroke="#4d9960" stroke-width="2" d="M5 2v8M1 6h8"/><ellipse fill="none" stroke="#777" cx="5" cy="14" rx="3" ry="1.500"/><path fill="none" stroke="#b2383b" stroke-width="1.500" d="M9 9h7M11 9v6M14 9v5l1 1"/></svg></button>
                    </div>
                </aside>
            </div>
            <div class="sheet-tabs">
                <div class="pager"><button>|◂</button><button>◂</button><button>▸</button><button>▸|</button></div>
                <button class="tab">Sheet1</button><button class="tab">Sheet2</button><button class="tab">Sheet3</button><button class="tab">Sheet4</button><button class="tab">Sheet5</button><button class="tab">Sheet6</button><button class="tab">Sheet7</button><button class="tab">Sheet8</button><button class="tab">Sheet9</button>
                <button class="tab long">Sheet10</button><button class="tab long">Sheet11</button><button class="tab long">Sheet12</button><button class="tab long">Sheet13</button><button class="tab long">Sheet14</button><button class="tab long">Sheet15</button><button class="tab long">Sheet16</button><button class="tab long">Sheet17</button><button class="tab long">Sheet18</button><button class="tab long">Sheet19</button><button class="tab long">Sheet20</button><button class="tab long">Sheet21</button><button class="tab long">Sheet22</button><button class="tab long">Sheet23</button><button class="tab long">Sheet24</button><button class="tab long current">Sheet25</button>
                <button class="tab new-tab" aria-label="New sheet"><svg viewBox="0 0 9 8"><path fill="#fff" stroke="#6a4bb0" d="M.5.500h8v7h-8z"/><path stroke="#d23a34" d="M2 3h3M3.500 1.500v3M4 5h3"/></svg></button>
            </div>
        </div>
        <aside class="rail">
            <svg viewBox="0 0 14 14"><path fill="#4a7fb8" stroke="#2b5486" d="M1.500 1.500h9v10h-9z"/><path fill="#7fabd8" d="M3 2h3v9H3z"/><path fill="#f2e36b" stroke="#a89b3a" stroke-width=".5" d="M4 12l5-4 5 4z"/></svg>
            <svg class="groups" viewBox="0 0 14 14"><path fill="#fff" stroke="#4a6d94" d="M3.500 2.500h6v5h-6z"/><path fill="#5e93cc" stroke="#2b5486" d="M6.500 5.500h5v5h-5z"/><path fill="#28436b" d="M0 1h2v2H0zM12 1h2v2h-2zM0 11h2v2H0zM12 11h2v2h-2z"/></svg>
            <span>Groups</span>
            <svg class="pictures" viewBox="0 0 14 14"><path fill="#fff" stroke="#3f6c9c" d="M3.500 3.500h9v8h-9zM1.500 2.500h10v7h-10z"/><circle cx="7" cy="6" r="2" fill="none" stroke="#4e9a5c"/><path stroke="#4e9a5c" d="M3 4l7 4"/></svg>
            <svg viewBox="0 0 14 14"><path fill="#eef5fb" stroke="#3f6c9c" d="M.5 2.500h5l1 1h7v9H.5z"/><path stroke="#c7483c" d="M8 2h5"/><path fill="none" stroke="#1f5390" stroke-width="1.500" d="M5 6q2-3 4 0L7 8.500V9M7 10v1.500"/></svg>
        </aside>
    </main>

    <footer class="statusbar">
        <svg viewBox="0 0 72 12"><path fill="#e8eef0" d="M1 1h11v10H1zM45 1h10v10H45zM60 1h10v10H60z"/><path fill="none" stroke="#333" d="M3 3.500h7v3H3zM5 7v3M47 3v2M47 7v2M53 3v2M53 7v2M49 3h2M49 9h2M62 3v6M68 3v6M63 6h4"/><g stroke="#e8e8e8" stroke-width="1.500"><circle cx="20" cy="4" r="3" fill="#a98754"/><path d="M18 6l-3 5"/><circle cx="35" cy="4" r="3" fill="#c4a64a"/><path d="M33 6l-4 5"/></g></svg>
        <button class="round" aria-label="Zoom out">−</button>
        <input type="range" min="0" max="100" value="54" aria-label="Zoom">
        <button class="round" aria-label="Zoom in">+</button>
        <svg class="share-icons" viewBox="0 0 44 12"><rect y="2" x="1" width="11" height="8" rx="2" fill="#e2231a"/><path fill="#fff" d="M5 4l4 2-4 2z"/><circle cx="22" cy="6" r="5" fill="#e8e8e8"/><circle cx="22" cy="6" r="2.500" fill="#b3202a"/><rect x="33" y="1" width="9" height="10" rx="1" fill="#f2f2f2"/><path stroke="#c33" fill="none" d="M37.500 8V3M36 5l1.500-2L39 5M35 9h5"/></svg>
    </footer>

    <footer class="taskbar">
        <div class="weather">
            <svg viewBox="0 0 18 18"><path fill="#f2b13c" d="M8 1l2 3 3 1-3 4-5 3-2-3 2-2-1-2 3-1z"/><circle cx="8" cy="11" r="4" fill="#b9cff3"/><circle cx="12" cy="11" r="5" fill="#c8d9f7"/><rect x="2" y="10" width="15" height="6" rx="3" fill="#a6c1ef"/></svg>
            <p>71°F<br><span>Mostly cloudy</span></p>
        </div>
        <svg class="start" viewBox="0 0 16 16"><path fill="#1787d4" d="M0 0h7.500v7.500H0zM8.500 0H16v7.500H8.500zM0 8.500h7.500V16H0zM8.500 8.500H16V16H8.500z"/></svg>
        <div class="search">
            <svg><use href="#search"/></svg>
            <input type="search" placeholder="Search" aria-label="Search">
            <svg class="meerkats" viewBox="0 0 32 18"><path stroke="#7f8f3c" fill="none" d="M4 17q-2-5-4-7M5 17V8M29 17q0-5 3-8M27 17q-1-4-1-7"/><ellipse cx="10" cy="12" rx="4" ry="5" fill="#c9995e"/><circle cx="9" cy="6" r="3" fill="#d9b27c"/><ellipse cx="20" cy="11" rx="5" ry="7" fill="#b98445"/><circle cx="20" cy="4" r="3.500" fill="#d0a261"/><path fill="#5b3d1e" d="M7 5h2v1H7zM10 5h1v1h-1zM18 3h1v2h-1zM21 3h1v2h-1z"/><ellipse cx="20" cy="12" rx="2" ry="4" fill="#efd8b0"/><path fill="#8c7c34" d="M4 16h24v2H4z"/></svg>
        </div>
        <div class="apps">
            <button><svg viewBox="0 0 18 18"><path fill="#f4f4f4" d="M7 1h10v10H7z"/><path fill="#c9c9c9" d="M9 7h8v4H9z"/><path fill="#2b2b2b" d="M2 4h6v7h5v5H2z"/></svg></button>
            <button><svg viewBox="0 0 18 18"><path fill="#6264b7" d="M2 9a7 7 0 1 1 3 6l-3 1z"/><rect x="5" y="6" width="6" height="6" rx="1" fill="#fff"/><path fill="#fff" d="M11 8l3-2v6l-3-2z"/></svg></button>
            <button><svg viewBox="0 0 18 18"><circle cx="9" cy="9" r="8" fill="#167bc4"/><path fill="#42c47c" d="M9 1a8 8 0 0 1 8 8q-1 4-6 3 2-4-2-5-5 0-8 3A8 8 0 0 1 9 1z"/><path fill="#0d4e91" d="M5 10q1-3 4-3-3 6 5 7-5 6-9-4z"/></svg></button>
            <button><svg viewBox="0 0 18 18"><path fill="#fff" d="M1 1h16v16H1z"/><circle cx="9" cy="9" r="7" fill="none" stroke="#e65a88"/><path fill="none" stroke="#5c5cd6" stroke-width="1.500" d="M7 12V5l5-1v7"/><circle cx="6" cy="12" r="1.500" fill="#d9418c"/><circle cx="11" cy="11" r="1.500" fill="#3f8be0"/></svg></button>
            <button><svg><use href="#chrome"/></svg></button>
            <button class="open"><svg viewBox="0 0 18 18"><path fill="#fff" stroke="#2f8a6b" stroke-width="2" d="M2 16l1-4a7 7 0 1 1 3 3z"/><path fill="none" stroke="#2f8a6b" stroke-width="2" d="M6 6q0 5 6 6"/><circle cx="14" cy="4" r="4" fill="#16727d"/><text class="badge" x="14" y="6">6</text></svg></button>
            <button class="open front"><svg viewBox="0 0 18 18"><path fill="#1f4aa8" d="M3 1h12v15H3z"/><text class="app-name" x="9" y="11">SE</text></svg></button>
            <button><svg viewBox="0 0 18 18"><path fill="#c4202a" d="M1 3l8-2 8 3v8H1z"/><path fill="#222" d="M2 11h14v6H2z"/><text class="app-name" x="9" y="10">SW</text><text class="app-tiny" x="9" y="16">2021</text></svg></button>
            <button><svg viewBox="0 0 18 18"><path fill="#111" d="M2 1h14v16H2z"/><g fill="none" stroke="#e7b32d"><circle cx="6" cy="7" r="2"/><circle cx="11" cy="4" r="2"/><path d="M7 6l3-2M6 4v6M13 2v4"/></g><text class="app-name" x="9" y="16">A</text></svg></button>
            <button><svg viewBox="0 0 18 18"><path fill="#111" d="M2 1h14v16H2z"/><g fill="none" stroke="#d4a32b"><circle cx="9" cy="4" r="2"/><circle cx="6" cy="8" r="2"/><circle cx="12" cy="8" r="2"/></g><text class="app-name" x="9" y="16">WB</text></svg></button>
            <button><svg viewBox="0 0 18 18"><path fill="#505860" d="M2 4h3l1-2h5l1 2h3v9H2z"/><circle cx="8" cy="8" r="3" fill="#2b3036"/><path fill="#4e8ccc" stroke="#2a5485" d="M8 9h9v6H8zM12 15v2"/></svg></button>
            <button class="open"><svg viewBox="0 0 18 18"><path fill="#e8a93a" d="M1 2h6l2 2h8v4H1z"/><path fill="#fbd35b" d="M1 5h16v11H1z"/><path fill="#2a80c8" d="M4 12h10v4H4z"/></svg></button>
            <button class="open"><svg viewBox="0 0 18 18"><circle cx="10" cy="9" r="8" fill="#e0603c"/><path fill="#f2a07e" d="M10 1a8 8 0 0 1 8 8h-8z"/><rect x="1" y="5" width="9" height="9" rx="1" fill="#b8371d"/><text class="app-name" x="5" y="12">P</text></svg></button>
            <button class="open"><svg viewBox="0 0 18 18"><path fill="#8a4fe0" d="M2 5l13-4 1 3-13 3zM2 8h14v9H2z"/><path fill="#b48bf2" d="M2 8h14v3L2 16z"/><path stroke="#efe4ff" d="M5 4l2 2M10 3l2 2"/></svg></button>
            <button class="open"><svg viewBox="0 0 18 18"><use href="#chrome" y="2" width="17" height="16"/><circle cx="14" cy="4" r="4" fill="#444"/><path stroke="#ccc" d="M12 6l3-4 1 3"/></svg></button>
        </div>
        <div class="tray">
            <svg class="up" viewBox="0 0 10 10"><path fill="none" stroke="#333" d="M2 7l3-3 3 3"/></svg>
            <svg class="cloud" viewBox="0 0 14 12"><path fill="#888" stroke="#333" d="M3 10q-3-1-1-4 0-2 3-2 2-3 5 0 3 1 3 4l-1 2z"/><path fill="#ddd" d="M4 8q3-4 7 0z"/></svg>
            <p class="lang">ENG<br>IN</p>
            <svg class="wifi" viewBox="0 0 12 12"><path fill="none" stroke="#444" d="M1 5q5-4 10 0M3 7q3-3 6 0M5 9q1-1 2 0"/></svg>
            <svg class="volume" viewBox="0 0 12 12"><path fill="none" stroke="#444" d="M1 4.500h2L6 2v8L3 7.500H1zM8 4q1 2 0 4M10 2.500q2 3.500 0 7"/></svg>
            <p class="clock">20:29<br>08-07-2024</p>
            <svg class="bell" viewBox="0 0 12 12"><path fill="#165c74" d="M1 9l1-2V5q0-4 4-4t4 4v2l1 2zM4 10h4L6 12z"/></svg>
            <svg class="copilot" viewBox="0 0 18 18"><path fill="#3a8de8" d="M5 1h6L8 9H1z"/><path fill="#e868a8" d="M10 3h5l2 6-4 7H7z"/><path fill="#f2b83a" d="M2 9h7l-2 7H4z"/><path fill="#4cc088" d="M1 9l4-8 2 4-2 6z"/><rect x="5" y="11" width="12" height="6" rx="1" fill="#e8c528"/><text class="pre" x="11" y="16">PRE</text></svg>
        </div>
    </footer>
</body>
</html>
```

FILE: styles.css
```css
*{
    box-sizing: border-box;
}
body{
    margin: 0;
    height: 100vh;
    display: flex;
    flex-direction: column;
    overflow: hidden;
    background: #ffffff;
    font-family: "Noto Sans", sans-serif;
    font-size: 7px;
    line-height: 8px;
    color: #333333;
}
button{
    font: inherit;
    color: inherit;
    background: none;
    border: 0;
    padding: 0;
    text-align: center;
}
p, h1, h2{
    margin: 0;
    font-weight: 400;
}
.sprite{
    position: absolute;
    width: 0;
    height: 0;
}

/* icon strokes */
.k{ stroke: #555555; }
.k:not([fill]){ fill: none; }
.o{ stroke: #de8b45; fill: none; }
.b{ stroke: #4a9cba; fill: none; }
.fo{ fill: #d9731f; }
.dash{ stroke-dasharray: 2 1; }
.thick{ stroke-width: 2; }
.wide-line{ stroke-width: 1.5; }
.thin-line{ stroke-width: .5; }
.ico{ font: bold 12px "Noto Sans", sans-serif; fill: #222222; }

/* title bar */
.titlebar{
    height: 37px;
    flex: none;
    background: linear-gradient(90deg, #006487 0%, #006487 55%, #29809f 75%, #5aa9c6 100%);
    border-bottom: 1px solid #c4e6f0;
    color: #ffffff;
}
.title-row{
    display: grid;
    grid-template-columns: 1fr auto 1fr;
    align-items: center;
    height: 21px;
}
.logo{
    display: flex;
    align-items: center;
    justify-content: center;
    margin-left: 4px;
    width: 16px;
    height: 17px;
    border: 1px solid #b8c8e8;
    background: #1f3f94;
    font-weight: 700;
    line-height: 12px;
}
.title-row h1{
    font-size: 8px;
    line-height: 12px;
}
.window-controls{
    display: flex;
    justify-content: flex-end;
    align-items: center;
    gap: 11px;
    padding-right: 5px;
}
.window-controls b{
    margin-right: -2px;
    font-weight: 800;
}
.titlebar button{
    display: flex;
}
.titlebar button svg{
    width: 10px;
    height: 10px;
}
.menu-row{
    display: flex;
    align-items: center;
    height: 15px;
}
.menu{
    display: flex;
    flex: 1;
    font-size: 8px;
    line-height: 15px;
}
.menu a{
    color: #ffffff;
    text-decoration: none;
    padding: 0 10px;
}
.menu .file{
    padding: 0 16px 0 12px;
}
.menu .active{
    color: #e3d185;
    background: #35777b;
    border-bottom: 1px solid #d8b25c;
}
.find{
    display: flex;
    align-items: center;
    width: 88px;
    height: 13px;
    background: #ffffff;
    color: #333333;
}
.find input{
    width: 76px;
    border: 0;
    padding: 0 2px;
    font: inherit;
    outline: 0;
}
.find svg{
    width: 9px;
    height: 9px;
}
.find input::placeholder{
    color: #333333;
}
.doc-controls{
    display: flex;
    align-items: center;
    gap: 2px;
    padding: 0 2px 0 30px;
}
.doc-controls .face{
    margin-right: 2px;
}
.titlebar .doc-controls svg{
    width: 9px;
    height: 9px;
}
.titlebar .doc-controls .face svg{
    width: 10px;
    height: 10px;
}

/* ribbon */
.ribbon{
    display: flex;
    flex: none;
    height: 58px;
    padding-top: 2px;
    border-bottom: 1px solid #d8d8d8;
}
.group{
    display: flex;
    flex-direction: column;
    justify-content: space-between;
    height: 52px;
    border-right: 1px solid #e2e2e2;
}
.tools{
    display: flex;
    height: 43px;
}
.group-name{
    text-align: center;
    color: #444444;
    white-space: nowrap;
}
.col{
    display: flex;
    flex-direction: column;
}
.split{
    border-left: 1px solid #e2e2e2;
    padding-left: 1px;
}
.tool{
    position: relative;
    display: flex;
    align-items: center;
    width: 14px;
    height: 14px;
}
.tool svg{
    width: 12px;
    height: 12px;
    margin: 1px;
    flex: none;
}
.more{
    width: 21px;
}
.more::after, .inline-drop::after, .drop::after, .caret{
    content: "";
    display: inline-block;
    border: 2px solid transparent;
    border-top-color: #333333;
    border-bottom: 0;
}
.more::after{
    margin-left: 1px;
}
.inline-drop{
    white-space: nowrap;
}
.inline-drop::after{
    margin: 0 0 2px 2px;
}
.drop::after{
    margin-top: 4px;
}
.on{
    background: #cfe4ea;
}
.xy{
    color: #3b7f9c;
    justify-content: center;
}
.labelled{
    width: auto;
    height: 13px;
}
.big{
    display: flex;
    flex-direction: column;
    align-items: center;
    justify-content: flex-start;
    width: 38px;
}
.big-icon{
    flex: none;
    width: 20px;
    height: 20px;
    margin: 2px 0 4px;
}
.big.narrow{
    width: 34px;
}
.big.wide{
    width: 48px;
}
.g-select{
    width: 51px;
}
.g-select .col{
    margin-left: -5px;
}
.g-draw{
    width: 216px;
}
.g-draw .big.wide{
    margin: 0 4px 0 -1px;
}
.g-draw .split{
    padding-left: 3px;
}
.g-relate{
    width: 82px;
    padding-left: 3px;
}
.g-relate .split{
    margin-left: 3px;
}
.g-intelli{
    width: 46px;
}
.g-intelli .tools{
    justify-content: center;
}
.g-dimension{
    width: 143px;
}
.g-dimension .more{
    margin-right: -7px;
}
.g-dimension .col:nth-child(2){
    margin: 0 7px 0 -3px;
}
.g-dimension .split{
    margin-left: 2px;
}
.g-annotation{
    width: 103px;
    padding-left: 3px;
}
.g-annotation .split{
    margin-left: 2px;
}
.g-arrange{
    width: 40px;
    padding-left: 3px;
}
.g-arrange .split{
    padding-left: 2px;
}
.g-views{
    width: 57px;
    padding-left: 3px;
}
.g-insert{
    width: 35px;
    padding-left: 2px;
}
.g-blocks{
    width: 36px;
}

.quick{
    display: flex;
    flex: none;
    height: 17px;
    padding: 0 0 3px 15px;
    align-items: center;
}
.quick .tool svg{
    width: 13px;
    height: 13px;
}
.quick .tool{
    width: 15px;
}
.quick .more{
    width: 21px;
}
.shortcuts{
    display: flex;
    flex: none;
    padding-left: 453px;
}
.shortcut-bar{
    display: flex;
    height: 15px;
    gap: 6px;
    padding: 0 1px 0 7px;
    border: 1px solid #e8e8e8;
}
.shortcut-bar button{
    display: flex;
    align-items: center;
    white-space: nowrap;
}
.shortcut-bar svg{
    width: 12px;
    height: 12px;
}

/* document area */
.main{
    display: flex;
    flex: 1;
    min-height: 0;
}
.document{
    display: flex;
    flex-direction: column;
    flex: 1;
    min-width: 0;
}
.prompt-bar{
    display: flex;
    align-items: center;
    flex: none;
    height: 17px;
    border-bottom: 1px solid #b8b8b8;
}
.prompt-bar svg{
    width: 14px;
    height: 8px;
    margin: 0 6px 0 3px;
}
.prompt-bar p{
    flex: 1;
    height: 16px;
    margin-right: 5px;
    padding-left: 1px;
    border-top: 1px solid #b0b0b0;
    border-left: 1px solid #b0b0b0;
    font-size: 8px;
    line-height: 13px;
}
.doc-tabs{
    display: flex;
    align-items: flex-end;
    justify-content: space-between;
    flex: none;
    height: 22px;
    padding-left: 1px;
    border-bottom: 1px solid #7aa7ac;
}
.doc-tab{
    display: flex;
    align-items: center;
    width: 107px;
    height: 19px;
    padding-left: 11px;
    background: #006487;
    color: #ffffff;
}
.doc-icon{
    width: 13px;
    height: 13px;
}
.doc-tab .x{
    width: 8px;
    height: 8px;
    margin-left: auto;
    margin-right: 2px;
}
.doc-nav svg{
    display: block;
    width: 40px;
    height: 10px;
    margin-bottom: 6px;
}
.workspace{
    position: relative;
    flex: 1;
    min-height: 0;
}
.sheet{
    display: block;
    width: 100%;
    height: 100%;
}
.edge{ stroke: #555555; }
.thin{ stroke: #333333; fill: none; stroke-width: 1; }
.grey{ stroke: #888888; }
.bold{ stroke: #000000; fill: none; stroke-width: 1.5; }
.slope{ stroke: #333333; stroke-dasharray: 14 3 3 3; }
.dim{ stroke: #444444; fill: none; }
.dim path{
    marker-start: url(#arrow);
    marker-end: url(#arrow);
}
.sheet marker path{
    stroke: none;
    fill: #000000;
}
.dim-text{
    font-family: "Roboto Condensed", Roboto, sans-serif;
    font-size: 12px;
    text-anchor: middle;
    fill: #333333;
}
.phi{
    font-size: 15px;
}
.small-text, .label-text{
    font-family: "Liberation Serif", serif;
    text-anchor: middle;
    fill: #222222;
}
.small-text{
    font-size: 8px;
}
.label-text{
    font-size: 12px;
}

/* text panel */
.panel{
    position: absolute;
    top: 15px;
    left: 24px;
    width: 210px;
    height: 395px;
    padding: 0 3px;
    background: #ffffff;
    border: 1px solid #e2e2e2;
    color: #444444;
}
.panel-title{
    display: flex;
    justify-content: space-between;
    align-items: center;
    height: 16px;
    padding: 0 2px 3px 1px;
}
.panel-title span{
    display: flex;
    align-items: center;
    gap: 4px;
    color: #222222;
}
.panel-title svg{
    width: 7px;
    height: 7px;
}
.panel-title .q{
    width: 8px;
    height: 10px;
}
.panel h2{
    display: flex;
    align-items: center;
    height: 17px;
    padding-left: 5px;
    background: #d8eaed;
    font-size: 8px;
}
.panel h2::before{
    content: "";
    margin-right: 5px;
    border-left: 5px solid transparent;
    border-bottom: 5px solid #222222;
}
.panel-body{
    padding: 5px 6px 0;
}
.panel-body button{
    width: 19px;
    height: 19px;
    border: 1px solid #dcdcdc;
    border-radius: 2px;
    vertical-align: top;
}
.panel-body button svg{
    display: block;
    width: 17px;
    height: 17px;
    margin: auto;
}
.panel-body .wide{
    width: 26px;
}
.panel-body .flat{
    border-color: #f0f0f0;
}
.format{
    height: 71px;
}
.caret{
    margin: 8px 0 0 3px;
    border-width: 3px 3px 0;
}
.row{
    display: flex;
    align-items: center;
    gap: 7px;
}
.format .row{
    margin-top: 3px;
    height: 16px;
}
.format .row + .row{
    margin-top: 5px;
}
.indent{
    padding-left: 3px;
}
.select{
    position: relative;
    display: block;
    height: 14px;
}
.select::after{
    content: "";
    position: absolute;
    right: 4px;
    top: 4px;
    width: 4px;
    height: 4px;
    border: solid #999999;
    border-width: 0 1px 1px 0;
    transform: rotate(45deg);
}
.select select{
    appearance: none;
    display: block;
    width: 100%;
    height: 14px;
    padding: 0 3px;
    border: 1px solid #aaaaaa;
    border-radius: 1px;
    background: #ffffff;
    color: #444444;
    font: inherit;
}
.w60{ width: 60px; }
.w40{ width: 40px; }
.w130{ width: 130px; }
.font{
    height: 64px;
    padding-left: 3px;
}
.font .row:first-child{
    padding-left: 3px;
}
.size{
    margin-top: 2px;
}
.letters{
    gap: 3px;
    margin-top: 3px;
    padding-left: 2px;
    font-family: "Liberation Serif", serif;
    font-size: 14px;
    line-height: 16px;
    color: #222222;
}
.paragraph{
    display: flex;
    gap: 6px;
    height: 30px;
    padding-top: 4px;
}
.textbox{
    display: flex;
    gap: 3px;
    padding-left: 4px;
}

/* sheet tabs */
.sheet-tabs{
    display: flex;
    flex: none;
    height: 10px;
    border-top: 1px solid #444444;
    background: #bcbcbc;
    font-family: "Liberation Sans", sans-serif;
    color: #222222;
    line-height: 9px;
}
.pager{
    display: flex;
    width: 45px;
    background: #e8e8e8;
    color: #777777;
}
.pager button{
    width: 11px;
    border-right: 1px solid #999999;
    font-size: 6px;
}
.tab{
    position: relative;
    width: 39px;
    height: 9px;
    background: #f8d5b8;
    border-bottom: 1px solid #555555;
}
.tab::after{
    content: "";
    position: absolute;
    right: 0;
    top: 0;
    height: 8px;
    border-right: 1px solid #444444;
    transform: skewX(-25deg);
}
.tab::before{
    content: "";
    position: absolute;
    right: -3px;
    bottom: -1px;
    border: 3px solid transparent;
    border-top: 0;
    border-bottom-color: #5e97ad;
}
.long{
    width: 44px;
}
.current{
    background: #ffffff;
    border-bottom-color: #ffffff;
    color: #000000;
    font-weight: 700;
}
.new-tab{
    width: 22px;
}
.new-tab svg{
    display: block;
    width: 9px;
    height: 8px;
    margin: auto;
}
.rail{
    display: flex;
    flex-direction: column;
    flex: none;
    align-items: flex-end;
    width: 18px;
    padding-top: 5px;
    background: #fafafa;
}
.rail svg{
    width: 14px;
    height: 14px;
}
.rail .groups{
    margin-top: 9px;
}
.rail span{
    writing-mode: vertical-rl;
    margin: 2px 3px 8px 0;
    font-size: 8px;
}
.rail .pictures{
    margin-bottom: 8px;
}

.statusbar{
    display: flex;
    align-items: center;
    justify-content: flex-end;
    flex: none;
    height: 14px;
    background: #006487;
    gap: 2px;
}
.statusbar svg{
    width: 72px;
    height: 12px;
}
.round{
    width: 9px;
    height: 9px;
    border-radius: 50%;
    background: #e6e6e6;
    color: #b35f2a;
    font-size: 9px;
    line-height: 8px;
}
.statusbar input{
    appearance: none;
    width: 75px;
    height: 9px;
    margin: 0;
    background: linear-gradient(#ffffff, #ffffff) center / 100% 1px no-repeat;
}
.statusbar input::-webkit-slider-thumb{
    appearance: none;
    width: 4px;
    height: 8px;
    border-radius: 1px;
    background: #e6e6e6;
}
.statusbar .share-icons{
    width: 44px;
    margin-left: 4px;
}

/* taskbar */
.taskbar{
    display: flex;
    align-items: center;
    flex: none;
    height: 31px;
    background: linear-gradient(90deg, #dedfd0, #dcdcd8 25%, #d8dcdd 45%, #d6dddb);
    line-height: 11px;
    font-size: 8px;
}
.weather{
    display: flex;
    align-items: center;
    gap: 5px;
    width: 338px;
    padding-left: 10px;
}
.weather svg{
    width: 18px;
    height: 18px;
}
.weather span{
    color: #666666;
}
.start{
    width: 16px;
    height: 16px;
    margin-right: 9px;
}
.search{
    display: flex;
    align-items: center;
    width: 146px;
    height: 19px;
    padding: 0 3px 0 7px;
    border-radius: 10px;
    background: #f3f6f5;
}
.search svg{
    width: 10px;
    height: 10px;
}
.search input{
    flex: 1;
    width: 50px;
    border: 0;
    padding: 0 7px;
    background: none;
    font: inherit;
    font-size: 9px;
}
.search .meerkats{
    width: 32px;
    height: 18px;
}
.apps{
    display: flex;
    width: 442px;
}
.apps button{
    position: relative;
    flex: 1;
    display: flex;
    justify-content: center;
    align-items: center;
    height: 27px;
}
.apps svg{
    width: 17px;
    height: 17px;
}
.open::after{
    content: "";
    position: absolute;
    left: 50%;
    bottom: 0;
    width: 4px;
    height: 2px;
    margin-left: -2px;
    border-radius: 1px;
    background: #888888;
}
.front{
    background: #f0f4f3;
    border-radius: 3px;
}
.front::after{
    width: 10px;
    margin-left: -5px;
    background: #167c9c;
}
.app-name, .app-tiny, .badge, .pre{
    font: bold 7px "Liberation Sans", sans-serif;
    text-anchor: middle;
    fill: #ffffff;
}
.app-tiny, .pre{
    font-size: 5px;
}
.pre{
    fill: #333333;
}
.tray{
    display: flex;
    align-items: center;
    margin-left: auto;
    padding-right: 11px;
    color: #333333;
    text-align: right;
}
.up{
    width: 10px;
    height: 10px;
}
.cloud{
    width: 14px;
    height: 12px;
    margin: 0 10px 0 9px;
}
.lang{
    text-align: center;
}
.wifi{
    width: 12px;
    height: 12px;
    margin: 0 4px 0 11px;
}
.volume{
    width: 12px;
    height: 12px;
}
.clock{
    margin-left: 10px;
}
.bell{
    width: 12px;
    height: 12px;
    margin: 0 10px 0 4px;
}
.copilot{
    width: 18px;
    height: 18px;
}
```
